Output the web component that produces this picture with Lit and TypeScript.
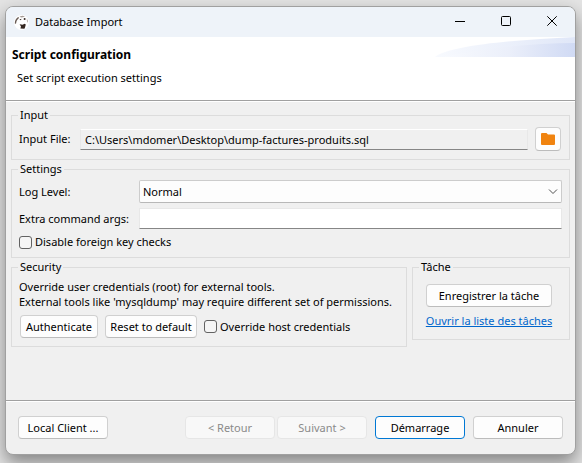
import { LitElement, html, css } from "lit";
import { customElement } from "lit/decorators.js";

@customElement("app-root")
export class AppRoot extends LitElement {
  static styles = css`
    :host {
      display: block;
      color: #000;
      font: 11px/16px "Noto Sans", "Open Sans", sans-serif;
    }
    * { box-sizing: border-box; }
    .desktop {
      display: flex;
      min-height: 100vh;
      padding: 6px 6px 8px 5px;
      background: #e4e4e4;
      overflow: hidden;
    }
    .window {
      display: flex;
      flex-direction: column;
      flex: 1;
      min-width: 0;
      border: 1px solid #a0a0a0;
      border-radius: 8px;
      background: #f0f0f0;
      box-shadow: 0 8px 18px rgba(0, 0, 0, 0.42);
      overflow: hidden;
    }
    .titlebar {
      display: flex;
      align-items: center;
      height: 30px;
      padding-left: 8px;
      background: #eef3f9;
    }
    .caption { flex: 1; padding-left: 6px; }
    .logo, .sys svg, .browse svg, .swoosh { display: block; }
    .sys {
      display: flex;
      align-items: center;
      justify-content: center;
      width: 46px;
      height: 30px;
      padding: 0 0 2px;
      border: 0;
      background: none;
    }
    .header {
      display: flex;
      justify-content: space-between;
      align-items: flex-start;
      min-height: 64px;
      background: #fff;
      border-bottom: 1px solid #a0a0a0;
    }
    .heading { padding: 9px 0 0 6px; }
    h1 { margin: 0; font-size: 12px; line-height: 18px; font-weight: 700; }
    .heading p { margin: 6px 0 0 5px; }
    .body {
      display: flex;
      flex-direction: column;
      flex: 1;
      gap: 1px;
      padding: 5px 5px;
      border-top: 1px solid #fff;
    }
    fieldset {
      min-width: 0;
      margin: 0;
      padding: 4px 7px 8px;
      border: 1px solid #dcdcdc;
    }
    legend { height: 16px; padding: 0 2px; margin-left: -1px; }
    .row { display: flex; align-items: center; }
    input, select, button { font: inherit; color: inherit; margin: 0; }
    .field {
      flex: 1;
      min-width: 0;
      height: 21px;
      padding: 0 4px;
      border: 1px solid #e8e8e8;
      border-bottom-color: #868686;
      background: #fff;
      outline: 0;
    }
    .readonly { background: #f0f0f0; border-top-color: #fff; }
    .input-row { gap: 7px; padding-right: 1px; }
    .input-row label { width: 54px; white-space: nowrap; }
    .btn.browse { width: 26px; height: 24px; padding: 0; display: flex; align-items: center; justify-content: center; }
    .grid {
      display: grid;
      grid-template-columns: 113px 1fr;
      column-gap: 7px;
      row-gap: 5px;
      align-items: center;
    }
    .grid label { white-space: nowrap; }
    .combo { position: relative; display: flex; }
    select {
      flex: 1;
      height: 23px;
      padding: 0 24px 0 3px;
      appearance: none;
      border: 1px solid #ccc;
      border-bottom-color: #b8b8b8;
      border-radius: 2px;
      background: #fdfdfd;
    }
    .chevron { position: absolute; right: 4px; top: 8px; pointer-events: none; }
    .check { display: flex; align-items: center; gap: 3px; white-space: nowrap; }
    .check input {
      appearance: none;
      width: 13px;
      height: 13px;
      border: 1px solid #626262;
      border-radius: 3px;
      background: #f5f5f5;
    }
    .wide { grid-column: 1 / -1; }
    .settings { padding-top: 3px; padding-bottom: 7px; }
    .btn {
      height: 23px;
      padding: 0 4px;
      border: 1px solid #d0d0d0;
      border-bottom-color: #bcbcbc;
      border-radius: 4px;
      background: #fdfdfd;
      line-height: 16px;
      white-space: nowrap;
    }
    .columns { display: flex; align-items: flex-start; gap: 5px; }
    .security { flex: 1; }
    .security p { margin: 0 0 6px; line-height: 15px; white-space: nowrap; }
    .security .row { gap: 7px; padding-left: 1px; }
    .auth { width: 78px; }
    .reset { width: 92px; }
    .task { width: 158px; padding: 9px 7px 10px; }
    .stack { display: flex; flex-direction: column; align-items: center; gap: 6px; }
    .save { width: 126px; }
    .stack { padding-right: 4px; }
    a { color: #0066cc; white-space: nowrap; }
    .footer {
      display: flex;
      justify-content: space-between;
      padding: 14px 12px 15px;
      border-top: 1px solid #fff;
      box-shadow: 0 -1px 0 #a0a0a0;
    }
    .footer .btn { width: 90px; }
    .group { display: flex; gap: 8px; }
    .nav { display: flex; gap: 2px; }
    .btn:disabled { color: #8a8a8a; background: #f8f8f8; border-color: #e6e6e6; }
    .footer .primary { border-color: #0078d4; }
  `;

  render() {
    return html`
      <div class="desktop">
        <main class="window">
          <div class="titlebar">
            <svg class="logo" width="15" height="15" viewBox="0 0 15 15" aria-hidden="true">
              <circle cx="7.5" cy="7.5" r="7.5" fill="#fff" />
              <path d="M.8 8.5C.8 5 2.5 2.5 4.6 2L5 3 3.6 4.4 2.6 6 2 8.8Z" fill="#6b5d57" />
              <path d="M5.5 1.5L8.5.8 11 1.6 9 2.2 7 2.4Z" fill="#a69c97" />
              <circle cx="10.6" cy="4" r="1" fill="#3a2d29" />
              <path d="M5.4 4.6L7.4 3.8 7 5.2Z" fill="#3a2d29" />
              <path d="M5.6 9.2L8.5 9.8 10.6 8.7 11.8 9.4 11 12.4 10.4 13.8 6.4 13.4 7 11.6Z" fill="#33251f" />
              <path d="M12.8 3.5L14 6 13.8 8 12.9 6Z" fill="#b0a7a2" />
            </svg>
            <span class="caption">Database Import</span>
            <button class="sys" aria-label="Minimize">
              <svg width="10" height="10"><path d="M0 5.5H10" stroke="#000" /></svg>
            </button>
            <button class="sys" aria-label="Maximize">
              <svg width="10" height="10"><rect x=".5" y=".5" width="9" height="9" rx="1" fill="none" stroke="#000" /></svg>
            </button>
            <button class="sys" aria-label="Close">
              <svg width="10" height="10"><path d="M.3.3L9.7 9.7M9.7.3L.3 9.7" stroke="#000" /></svg>
            </button>
          </div>

          <header class="header">
            <div class="heading">
              <h1>Script configuration</h1>
              <p>Set script execution settings</p>
            </div>
            <svg class="swoosh" width="140" height="20" viewBox="0 0 140 20" aria-hidden="true">
              <defs>
                <linearGradient id="outer"><stop stop-color="#f8fafe" /><stop offset="1" stop-color="#e0e7f8" /></linearGradient>
                <linearGradient id="inner"><stop stop-color="#f8fafe" /><stop offset=".5" stop-color="#ebeffa" /><stop offset="1" stop-color="#d0daf4" /></linearGradient>
              </defs>
              <path d="M0 20C14 9 75 3 140 0V20Z" fill="url(#outer)" />
              <path d="M8 20C45 12 95 6 140 6V20Z" fill="url(#inner)" />
            </svg>
          </header>

          <div class="body">
            <fieldset>
              <legend>Input</legend>
              <div class="row input-row">
                <label for="file">Input File:</label>
                <input id="file" class="field readonly" readonly value="C:\\Users\\mdomer\\Desktop\\dump-factures-produits.sql" />
                <button class="btn browse" aria-label="Browse">
                  <svg width="14" height="12" viewBox="0 0 14 12"><path d="M0 1Q0 0 1 0H5.5L7 1.5H13Q14 1.5 14 2.5V11Q14 12 13 12H1Q0 12 0 11Z" fill="#f0830f" /></svg>
                </button>
              </div>
            </fieldset>

            <fieldset class="settings">
              <legend>Settings</legend>
              <div class="grid">
                <label for="level">Log Level:</label>
                <div class="combo">
                  <select id="level"><option>Normal</option></select>
                  <svg class="chevron" width="10" height="7"><path d="M1 1.5L5 5.5 9 1.5" fill="none" stroke="#505050" /></svg>
                </div>
                <label for="args">Extra command args:</label>
                <input id="args" class="field" />
                <label class="check wide"><input type="checkbox" />Disable foreign key checks</label>
              </div>
            </fieldset>

            <div class="columns">
              <fieldset class="security">
                <legend>Security</legend>
                <p>Override user credentials (root) for external tools.<br />External tools like 'mysqldump' may require different set of permissions.</p>
                <div class="row">
                  <button class="btn auth">Authenticate</button>
                  <button class="btn reset">Reset to default</button>
                  <label class="check"><input type="checkbox" />Override host credentials</label>
                </div>
              </fieldset>
              <fieldset class="task">
                <legend>Tâche</legend>
                <div class="stack">
                  <button class="btn save">Enregistrer la tâche</button>
                  <a href="#">Ouvrir la liste des tâches</a>
                </div>
              </fieldset>
            </div>
          </div>

          <footer class="footer">
            <button class="btn">Local Client ...</button>
            <div class="group">
              <div class="nav">
                <button class="btn" disabled>&lt; Retour</button>
                <button class="btn" disabled>Suivant &gt;</button>
              </div>
              <button class="btn primary">Démarrage</button>
              <button class="btn">Annuler</button>
            </div>
          </footer>
        </main>
      </div>
    `;
  }
}
